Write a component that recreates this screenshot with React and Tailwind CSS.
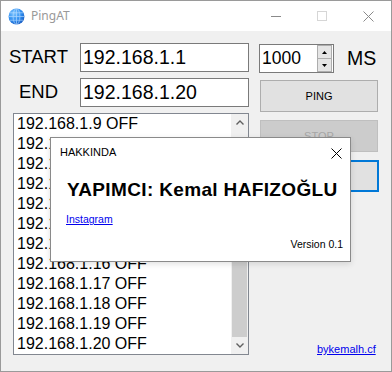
import React from "react";

const rows = [9, 10, 11, 12, 13, 14, 15, 16, 17, 18, 19, 20].map(
  (n) => `192.168.1.${n} OFF`
);

function Globe() {
  return (
    <svg width="17" height="17" viewBox="0 0 16 16">
      <defs>
        <radialGradient id="g" cx="35%" cy="30%" r="75%">
          <stop offset="0%" stopColor="#7cc4ff" />
          <stop offset="60%" stopColor="#2f8ef0" />
          <stop offset="100%" stopColor="#1b5fc4" />
        </radialGradient>
      </defs>
      <circle cx="8" cy="8" r="7.5" fill="url(#g)" />
      <g fill="none" stroke="#bfe0ff" strokeWidth="0.7" opacity="0.8">
        <ellipse cx="8" cy="8" rx="3.2" ry="7.5" />
        <line x1="8" y1="0.5" x2="8" y2="15.5" />
        <line x1="0.5" y1="8" x2="15.5" y2="8" />
        <path d="M1.8 4.5 H14.2 M1.8 11.5 H14.2" />
      </g>
    </svg>
  );
}

function Caret({ down }) {
  return (
    <svg width="8" height="5" viewBox="0 0 8 5">
      <polyline
        points={down ? "0.5,0.5 4,4 7.5,0.5" : "0.5,4.5 4,1 7.5,4.5"}
        fill="none"
        stroke="#606060"
        strokeWidth="1.4"
      />
    </svg>
  );
}

function Triangle({ down }) {
  return (
    <svg width="5" height="3" viewBox="0 0 5 3">
      <polygon points={down ? "0,0 5,0 2.5,3" : "0,3 5,3 2.5,0"} fill="#000" />
    </svg>
  );
}

export default function App() {
  return (
    <div className="w-[392px] h-[372px] box-border border border-[#9a9a9a] bg-[#f0f0f0] flex flex-col relative font-['Liberation_Sans',Arial,sans-serif] text-black overflow-hidden">
      {/* title bar */}
      <div className="h-[30px] bg-white flex items-center shrink-0">
        <div className="pl-[7px] flex items-center">
          <Globe />
        </div>
        <span className="ml-[6px] text-[12px] text-[#999999] font-['Noto_Sans',sans-serif]">
          PingAT
        </span>
        <div className="ml-auto flex h-full">
          <div className="w-[46px] flex items-center justify-center">
            <div className="w-[10px] h-px bg-[#8a8a8a]" />
          </div>
          <div className="w-[46px] flex items-center justify-center">
            <div className="w-[10px] h-[10px] border border-[#d6d6d6]" />
          </div>
          <div className="w-[46px] flex items-center justify-center">
            <svg width="11" height="11" viewBox="0 0 11 11">
              <path d="M0.5 0.5 L10.5 10.5 M10.5 0.5 L0.5 10.5" stroke="#8a8a8a" strokeWidth="1" />
            </svg>
          </div>
        </div>
      </div>

      {/* content */}
      <div className="flex-1 flex pt-[12px] pl-[8px]">
        <div className="w-[240px] flex flex-col">
          <div className="flex h-[29px] items-center">
            <span className="w-[71px] text-[18.5px] leading-none">START</span>
            <div className="w-[169px] h-[29px] box-border border border-[#7a7a7a] bg-white pl-[2px] flex items-center text-[19.5px]">
              192.168.1.1
            </div>
          </div>
          <div className="flex h-[29px] items-center mt-[6px]">
            <span className="w-[71px] pl-[10px] text-[18.5px] leading-none">END</span>
            <div className="w-[169px] h-[29px] box-border border border-[#7a7a7a] bg-white pl-[2px] flex items-center text-[19.5px]">
              192.168.1.20
            </div>
          </div>
          <div className="mt-[6px] ml-[4px] w-[236px] h-[242px] box-border border border-[#828790] bg-white flex">
            <div className="flex-1 flex flex-col pl-[3px]">
              {rows.map((r) => (
                <div key={r} className="h-[20px] leading-[20px] text-[16px] whitespace-nowrap">
                  {r}
                </div>
              ))}
            </div>
            <div className="w-[17px] bg-[#f0f0f0] flex flex-col">
              <div className="h-[17px] flex items-center justify-center">
                <Caret />
              </div>
              <div className="flex-1 flex flex-col justify-end px-px">
                <div className="h-[123px] bg-[#cdcdcd]" />
              </div>
              <div className="h-[17px] flex items-center justify-center">
                <Caret down />
              </div>
            </div>
          </div>
        </div>

        <div className="ml-[10px] flex flex-col w-[120px]">
          <div className="flex items-center mt-[1px] h-[29px]">
            <div className="w-[75px] h-[29px] box-border border border-[#7a7a7a] bg-white flex items-center">
              <span className="pl-[2px] text-[17.5px] flex-1">1000</span>
              <div className="w-[15px] h-[27px] flex flex-col mr-px">
                <div className="flex-1 box-border border border-[#adadad] bg-[#e5e5e5] flex items-center justify-center">
                  <Triangle />
                </div>
                <div className="flex-1 box-border border border-[#adadad] border-t-0 bg-[#e5e5e5] flex items-center justify-center">
                  <Triangle down />
                </div>
              </div>
            </div>
            <span className="ml-[13px] text-[19.5px] leading-none">MS</span>
          </div>
          <button className="mt-[7px] ml-[1px] w-[118px] h-[32px] box-border border border-[#adadad] bg-[#e1e1e1] text-[11px] text-black">
            PING
          </button>
          <button className="mt-[8px] ml-[1px] w-[118px] h-[32px] box-border border border-[#bfbfbf] bg-[#cccccc] text-[11px] text-[#a6a6a6]">
            STOP
          </button>
          <button className="mt-[8px] ml-[1px] w-[119px] h-[32px] box-border border-2 border-[#0078d7] bg-[#e1e1e1] text-[11px] text-black">
            HAKKINDA
          </button>
          <a className="mt-auto mb-[15px] ml-[58px] text-[11px] leading-[13px] text-[#0000ee] underline">
            bykemalh.cf
          </a>
        </div>
      </div>

      {/* about dialog */}
      <div className="absolute left-[49px] top-[136px] w-[301px] h-[125px] box-border border border-[#8a8a8a] bg-white flex flex-col shadow-[0_2px_6px_rgba(0,0,0,0.12)]">
        <div className="flex items-start justify-between pt-[8px] pl-[9px] pr-[8px]">
          <span className="text-[11px] leading-[13px]">HAKKINDA</span>
          <svg className="mt-[2px]" width="11" height="11" viewBox="0 0 11 11">
            <path d="M0.5 0.5 L10.5 10.5 M10.5 0.5 L0.5 10.5" stroke="#000" strokeWidth="1" />
          </svg>
        </div>
        <div className="mt-[19px] pl-[16px] text-[19px] leading-[23px] font-bold tracking-[0.35px] whitespace-nowrap">
          YAPIMCI: Kemal HAFIZOĞLU
        </div>
        <a className="mt-[12px] ml-[15px] text-[10.5px] leading-[13px] text-[#0000ee] underline self-start">
          Instagram
        </a>
        <div className="mt-[12px] pr-[7px] self-end text-[10.5px] leading-[13px]">
          Version 0.1
        </div>
      </div>
    </div>
  );
}
